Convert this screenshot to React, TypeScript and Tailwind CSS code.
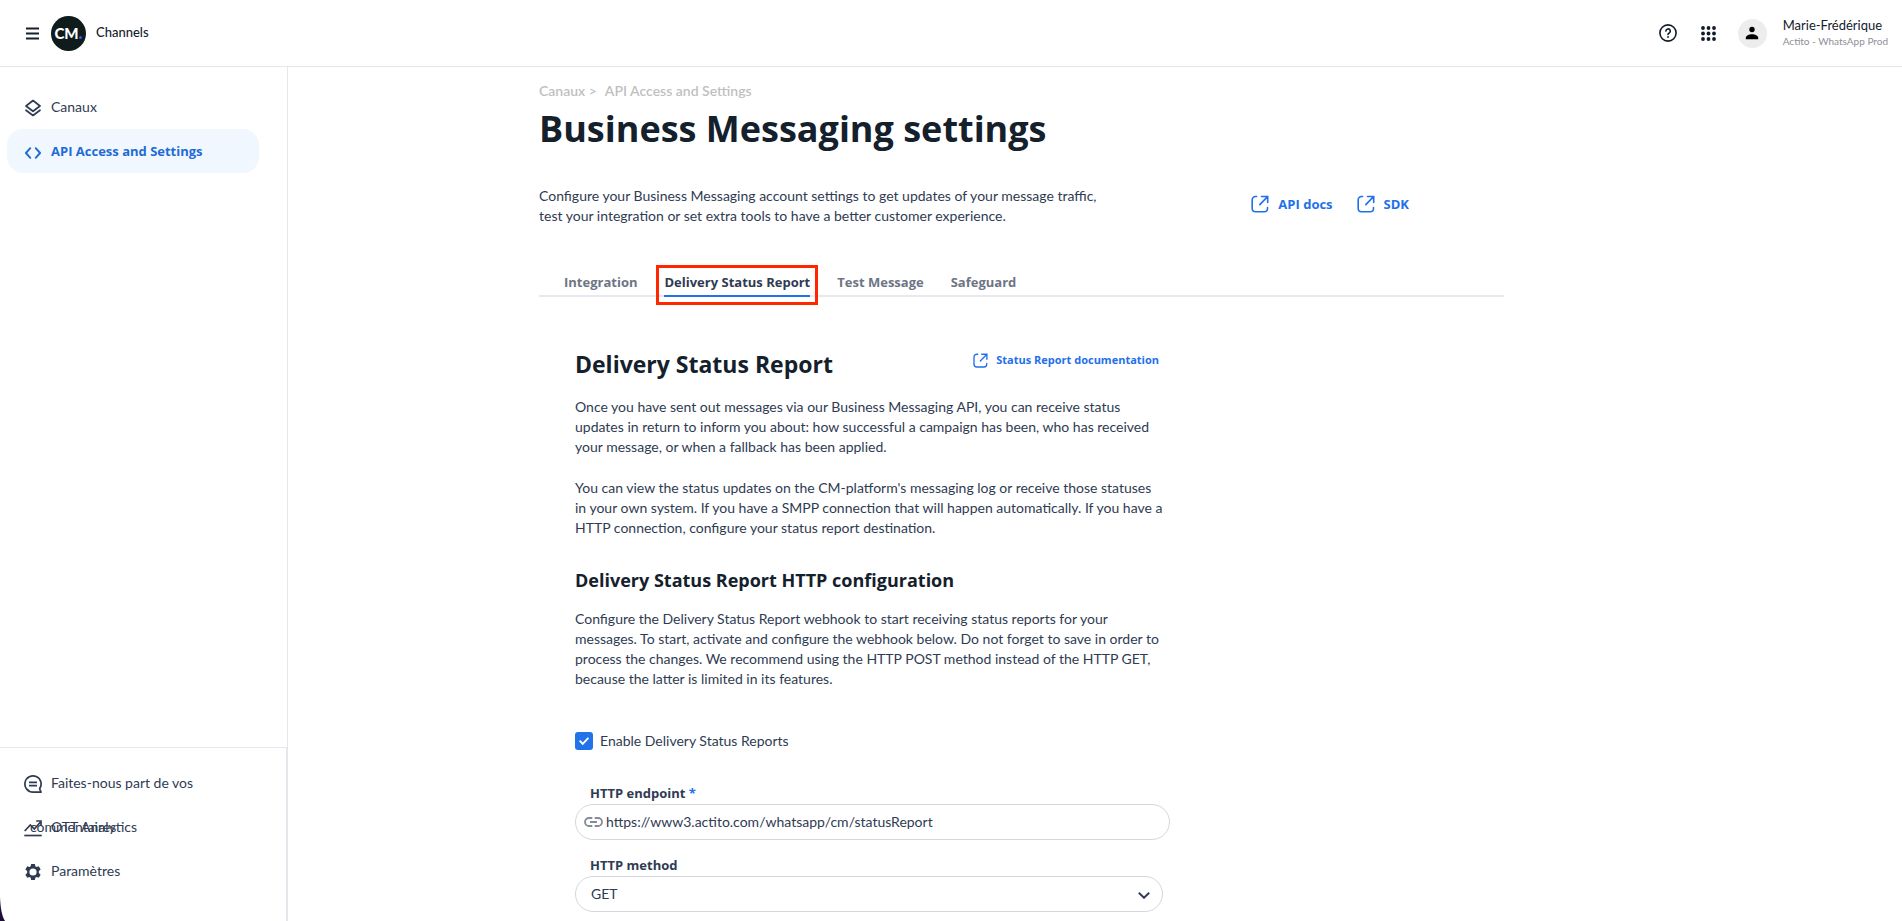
import React from "react";
import { clsx } from "clsx";

interface NavItemProps {
  label: string;
  icon: React.ReactNode;
  active?: boolean;
}

const TABS = ["Integration", "Delivery Status Report", "Test Message", "Safeguard"];

function LayersIcon() {
  return (
    <svg viewBox="0 0 18 18" className="w-[18px] h-[18px]" fill="none" stroke="currentColor" strokeWidth="1.7" strokeLinejoin="round" strokeLinecap="round">
      <path d="M9 1.5 16 7 9 12.3 2 7z" />
      <path d="m2 11.2 7 5.3 7-5.3" />
    </svg>
  );
}

function CodeIcon() {
  return (
    <svg viewBox="0 0 18 18" className="w-[18px] h-[18px]" fill="none" stroke="currentColor" strokeWidth="1.9" strokeLinejoin="round" strokeLinecap="round">
      <path d="M6.3 4.2 1.9 9l4.4 4.8M11.7 4.2 16.1 9l-4.4 4.8" />
    </svg>
  );
}

function FeedbackIcon() {
  return (
    <svg viewBox="0 0 18 18" className="w-[18px] h-[18px]" fill="none" stroke="currentColor" strokeWidth="1.7">
      <path d="M9 17.1A8.1 8.1 0 1 1 15.6 13.7L17 17.1H9" strokeLinejoin="round" />
      <path d="M5 7.3h8M5 10.6h8" />
    </svg>
  );
}

function AnalyticsIcon() {
  return (
    <svg viewBox="0 0 18 18" className="w-[18px] h-[18px]" fill="none" stroke="currentColor" strokeWidth="1.7">
      <path d="m.7 12 5.6-6 4 4L16.5 3" />
      <path d="M12.2 2H17v4.8" />
      <path d="M.3 16.5h17.4" />
    </svg>
  );
}

function GearIcon() {
  return (
    <svg viewBox="0 0 24 24" className="w-[18px] h-[18px]" fill="currentColor" fillRule="evenodd">
      <path d="M9.5 1.2h5l.6 3.2 1.6.9 3-1.1 2.5 4.3-2.4 2.1v2.8l2.4 2.1-2.5 4.3-3-1.1-1.6.9-.6 3.2h-5l-.6-3.2-1.6-.9-3 1.1-2.5-4.3 2.4-2.1v-2.8L1.8 8.5l2.5-4.3 3 1.1 1.6-.9zM12 7.2a4.8 4.8 0 1 0 0 9.6 4.8 4.8 0 0 0 0-9.6z" />
    </svg>
  );
}

function ExternalIcon({ className }: { className: string }) {
  return (
    <svg viewBox="0 0 18 18" className={className} fill="none" stroke="currentColor" strokeWidth="1.6" strokeLinecap="round">
      <path d="M5.6 1.5H4.5A3.3 3.3 0 0 0 1.2 4.8v8.7a3.3 3.3 0 0 0 3.3 3.3h8.7a3.3 3.3 0 0 0 3.3-3.3v-1" />
      <path d="M10.5 1.5h6.2v6M16.3 1.9 8.8 9.6" />
    </svg>
  );
}

function NavItem({ label, icon, active }: NavItemProps) {
  return (
    <a
      href="#"
      className={clsx(
        "block h-[44px] w-[252px] pl-[23px] pr-8 rounded-2xl leading-[44px]",
        active ? "bg-[#f0f7ff] text-[#1f6bd6] text-[13px] font-bold font-['Open_Sans',sans-serif]" : "text-[14px] text-[#2f3b52]"
      )}
    >
      <span className="inline-block align-middle -ml-[6px] mr-[9px]">{icon}</span>
      {label}
    </a>
  );
}

function DocLink({ label }: { label: string }) {
  return (
    <a href="#" className="flex items-center gap-[9px] text-[13px] leading-5 font-bold font-['Open_Sans',sans-serif] text-[#1f70ea]">
      <ExternalIcon className="w-[18px] h-[18px]" />
      {label}
    </a>
  );
}

function Header() {
  return (
    <header className="flex items-center justify-between h-[67px] pl-[26px] pr-[14px] border-b border-[#e6e6ec]">
      <div className="flex items-center">
        <button aria-label="Menu" className="text-[#14202c]">
          <svg viewBox="0 0 13 13" className="w-[13px] h-[13px]" stroke="currentColor" strokeWidth="2">
            <path d="M0 1.5h13M0 6.5h13M0 11.5h13" />
          </svg>
        </button>
        <div className="relative flex items-center justify-center w-[35px] h-[35px] ml-3 pr-1 rounded-full bg-[#101c1c] text-white text-[15px] leading-none font-black">
          CM
          <span className="absolute right-1 bottom-3 w-[3px] h-[3px] rounded-full bg-[#2a5cf5]" />
        </div>
        <span className="ml-[10px] text-[13px] font-medium text-[#14202c]">Channels</span>
      </div>
      <div className="flex items-center">
        <button aria-label="Help" className="text-[#101c2a]">
          <svg viewBox="0 0 18 18" className="w-[18px] h-[18px]" fill="none" stroke="currentColor" strokeWidth="1.6" strokeLinecap="round">
            <circle cx="9" cy="9" r="8.1" />
            <path d="M6.9 7.1a2.2 2.2 0 1 1 3.3 1.9c-.8.4-1.2.7-1.2 1.5" />
            <path d="M9 12.9v.1" strokeWidth="1.8" />
          </svg>
        </button>
        <button aria-label="Apps" className="ml-6 text-[#101c2a]">
          <svg viewBox="0 0 15 15" className="w-[15px] h-[15px]" fill="currentColor">
            {[2, 7.5, 13].map((y) => [2, 7.5, 13].map((x) => <circle key={`${x}-${y}`} cx={x} cy={y} r="1.9" />))}
          </svg>
        </button>
        <button aria-label="Account" className="flex items-center justify-center w-[29px] h-[29px] ml-[22px] rounded-full bg-[#ededee]">
          <svg viewBox="0 0 14 14" className="w-[14px] h-[14px]" fill="#000">
            <circle cx="7" cy="3.5" r="2.7" />
            <path d="M.8 13.2v-1.1C.8 9.5 4.2 8.3 7 8.3s6.2 1.2 6.2 3.8v1.1z" />
          </svg>
        </button>
        <div className="ml-4 whitespace-nowrap">
          <div className="text-[13px] leading-4 text-[#14202c]">Marie-Frédérique</div>
          <div className="text-[10px] leading-4 text-[#8d8f98]">Actito - WhatsApp Prod</div>
        </div>
      </div>
    </header>
  );
}

function Sidebar() {
  return (
    <aside className="relative flex flex-col shrink-0 w-[288px] border-r border-[#e6e6ec]">
      <nav className="flex flex-col pl-[7px] pt-[18px]">
        <NavItem label="Canaux" icon={<LayersIcon />} />
        <NavItem label="API Access and Settings" icon={<CodeIcon />} active />
      </nav>
      <nav className="flex flex-col mt-auto pl-[7px] pt-[13px] pb-7 border-t border-r border-[#e6e6ec]">
        <NavItem label="Faites-nous part de vos commentaires" icon={<FeedbackIcon />} />
        <NavItem label="OTT Analytics" icon={<AnalyticsIcon />} />
        <NavItem label="Paramètres" icon={<GearIcon />} />
      </nav>
      <svg viewBox="0 0 5 24" className="absolute left-0 bottom-0 w-[5px] h-[24px]" fill="#1d0f38">
        <path d="M0 0c.5 10 1.5 18 5 24H0z" />
      </svg>
    </aside>
  );
}

function Settings() {
  return (
    <div className="max-w-[965px] text-[14px] leading-5 text-[#2f3b52]">
      <div className="flex gap-2 font-semibold text-[#bfbfbf]">
        <span>Canaux &gt;</span>
        <span>API Access and Settings</span>
      </div>
      <h1 className="mt-1 text-[36px] leading-[48px] font-bold font-['Open_Sans',sans-serif] text-[#14202c]">Business Messaging settings</h1>

      <div className="flex items-start justify-between mt-[33px] pr-[95px]">
        <p>
          Configure your Business Messaging account settings to get updates of your message traffic,
          <br />
          test your integration or set extra tools to have a better customer experience.
        </p>
        <div className="flex gap-6 pt-2">
          <DocLink label="API docs" />
          <DocLink label="SDK" />
        </div>
      </div>

      <div className="flex gap-[27px] mt-[45px] pl-[25px] border-b-2 border-[#e8e8ee]">
        {TABS.map((tab, i) => (
          <button
            key={tab}
            className={clsx(
              "relative -mb-[2px] pb-[3px] h-[26px] border-b-2 text-[13px] font-bold font-['Open_Sans',sans-serif] whitespace-nowrap",
              i === 1 ? "border-[#2273ea] text-[#2f3b52]" : "border-transparent text-[#6d7585]"
            )}
          >
            {tab}
            {i === 1 && <span className="absolute -inset-x-2 -top-[6px] -bottom-[10px] border-3 border-[#ff2600]" />}
          </button>
        ))}
      </div>

      <section className="w-[595px] ml-9 mt-[49px]">
        <div className="flex justify-between pr-[11px]">
          <h2 className="text-[23px] leading-9 font-bold font-['Open_Sans',sans-serif] text-[#14202c]">Delivery Status Report</h2>
          <a href="#" className="flex items-center gap-2 h-7 text-[11px] font-bold font-['Open_Sans',sans-serif] text-[#1f70ea]">
            <ExternalIcon className="w-[15px] h-[15px]" />
            Status Report documentation
          </a>
        </div>
        <p className="mt-[15px]">
          Once you have sent out messages via our Business Messaging API, you can receive status
          <br />
          updates in return to inform you about: how successful a campaign has been, who has received
          <br />
          your message, or when a fallback has been applied.
        </p>
        <p className="mt-[21px]">
          You can view the status updates on the CM-platform's messaging log or receive those statuses
          <br />
          in your own system. If you have a SMPP connection that will happen automatically. If you have a
          <br />
          HTTP connection, configure your status report destination.
        </p>

        <h3 className="mt-7 text-[18px] leading-7 font-bold font-['Open_Sans',sans-serif] text-[#14202c]">Delivery Status Report HTTP configuration</h3>
        <p className="mt-[15px]">
          Configure the Delivery Status Report webhook to start receiving status reports for your
          <br />
          messages. To start, activate and configure the webhook below. Do not forget to save in order to
          <br />
          process the changes. We recommend using the HTTP POST method instead of the HTTP GET,
          <br />
          because the latter is limited in its features.
        </p>

        <div className="flex items-center gap-[7px] mt-[42px]">
          <span className="relative flex w-[18px] h-[18px]">
            <input id="enable" type="checkbox" defaultChecked className="appearance-none w-[18px] h-[18px] rounded-[3px] bg-[#2273ea]" />
            <svg viewBox="0 0 18 18" className="absolute inset-0 pointer-events-none" fill="none" stroke="#fff" strokeWidth="1.9">
              <path d="m4.7 8.7 3 3.2 5.7-6" />
            </svg>
          </span>
          <label htmlFor="enable">Enable Delivery Status Reports</label>
        </div>

        <label htmlFor="endpoint" className="block mt-8 ml-[15px] text-[13px] leading-5 font-bold font-['Open_Sans',sans-serif]">
          HTTP endpoint <span className="text-[#2273ea]">*</span>
        </label>
        <div className="flex items-center h-9 mt-px pl-2 border border-[#d5d6dc] rounded-full">
          <svg viewBox="0 0 19 10" className="w-[19px] h-[10px] shrink-0" fill="none" stroke="#858b98" strokeWidth="1.8">
            <path d="M8.3 1H5a4 4 0 0 0 0 8h3.3M10.7 1H14a4 4 0 0 1 0 8h-3.3M6 5h7" />
          </svg>
          <input id="endpoint" type="text" defaultValue="https://www3.actito.com/whatsapp/cm/statusReport" className="flex-1 ml-[3px] mr-4 outline-none" />
        </div>

        <label htmlFor="method" className="block mt-[15px] ml-[15px] text-[13px] leading-5 font-bold font-['Open_Sans',sans-serif]">
          HTTP method
        </label>
        <div className="relative w-[588px] mt-px">
          <select id="method" className="appearance-none w-full h-9 pl-[15px] border border-[#d5d6dc] rounded-full bg-white">
            <option>GET</option>
            <option>POST</option>
          </select>
          <svg viewBox="0 0 12 7" className="absolute right-[13px] top-[16px] w-3 h-[7px] pointer-events-none" fill="none" stroke="#2f3b52" strokeWidth="1.9">
            <path d="m.8.8 5.2 5 5.2-5" />
          </svg>
        </div>
      </section>
    </div>
  );
}

export default function App() {
  return (
    <div className="flex flex-col min-h-screen bg-white font-[Lato,'Noto_Sans',sans-serif]">
      <Header />
      <div className="flex flex-1">
        <Sidebar />
        <main className="flex-1 pt-[14px]">
          <div className="w-full max-w-[1112px] mx-auto">
            <Settings />
          </div>
        </main>
      </div>
    </div>
  );
}
